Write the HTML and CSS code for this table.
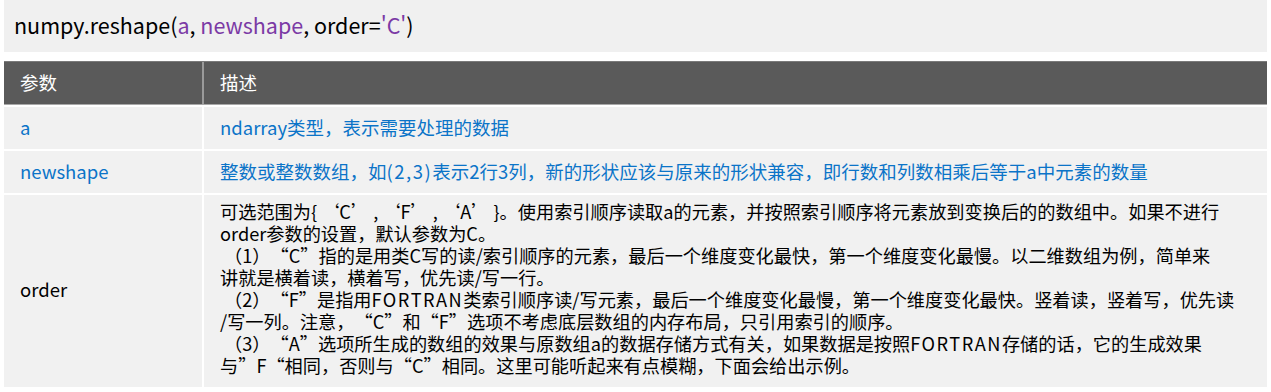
FILE: index.html
```html
<!DOCTYPE html>
<html lang="zh-Hans">
<head>
<meta charset="utf-8">
<link rel="stylesheet" href="styles.css">
</head>
<body>
<div class="page">
  <div class="code">numpy.reshape(<span class="arg">a</span>, <span class="arg">newshape</span>, order=<span class="arg">'C'</span>)</div>
  <div class="table">
    <div class="row head">
      <div class="cell">参数</div>
      <div class="cell">描述</div>
    </div>
    <div class="row blue">
      <div class="cell">a</div>
      <div class="cell">ndarray类型，表示需要处理的数据</div>
    </div>
    <div class="row blue">
      <div class="cell">newshape</div>
      <div class="cell">整数或整数数组，如<span class="lat">(2,3)</span>表示2行3列，新的形状应该与原来的形状兼容，即行数和列数相乘后等于a中元素的数量</div>
    </div>
    <div class="row plain">
      <div class="cell">order</div>
      <div class="cell multi">可选范围为{ ‘C’ , ‘F’ , ‘A’ }。使用索引顺序读取a的元素，并按照索引顺序将元素放到变换后的的数组中。如果不进行<br>order参数的设置，默认参数为C。<br>&nbsp;（1）“C”指的是用类C写的读/索引顺序的元素，最后一个维度变化最快，第一个维度变化最慢。以二维数组为例，简单来<br>讲就是横着读，横着写，优先读/写一行。<br>&nbsp;（2）“F”是指用<span class="lat">FORTRAN</span>类索引顺序读/写元素，最后一个维度变化最慢，第一个维度变化最快。竖着读，竖着写，优先读<br>/写一列。注意，“C”和“F”选项不考虑底层数组的内存布局，只引用索引的顺序。<br>&nbsp;（3）“A”选项所生成的数组的效果与原数组a的数据存储方式有关，如果数据是按照<span class="lat">FORTRAN</span>存储的话，它的生成效果<br>与”F“相同，否则与“C”相同。这里可能听起来有点模糊，下面会给出示例。</div>
    </div>
  </div>
</div>
</body>
</html>
```

FILE: styles.css
```css
* { box-sizing: border-box; }
html, body { margin: 0; padding: 0; background: #ffffff; }
body {
  font-family: "Noto Sans CJK SC", "Noto Sans", sans-serif;
  color: #000;
  text-spacing-trim: space-all;
}
.page {
  width: 1271px;
  padding: 0 4px;
}
.code {
  height: 52px;
  background: #f0f0f0;
  padding-left: 10px;
  font-size: 21.5px;
  line-height: 50px;
  color: #000;
}
.arg { color: #7b3aa5; }
.table {
  margin-top: 9px;
  display: flex;
  flex-direction: column;
  gap: 2px;
}
.row {
  display: grid;
  grid-template-columns: 198px 1fr;
  column-gap: 2px;
}
.cell {
  background: #f1f1f1;
  padding-left: 16px;
  font-size: 18.5px;
  display: flex;
  align-items: center;
}
.head {
  background: #9a9a9a;
  border-top: 1px solid #7a7a7a;
  border-bottom: 1px solid #a8a8a8;
  height: 44px;
}
.head .cell {
  background: #5a5a5a;
  color: #fff;
  padding-bottom: 2px;
}
.blue .cell {
  height: 42px;
  color: #0b74c8;
  padding-bottom: 2px;
}
.plain .cell {
  color: #000;
  height: 192px;
  padding-bottom: 4px;
}
.multi {
  display: block;
  font-size: 18.2px;
  line-height: 22px;
  padding: 5px 0 0 16px;
  white-space: nowrap;
}
.lat { letter-spacing: 1.5px; }
```
